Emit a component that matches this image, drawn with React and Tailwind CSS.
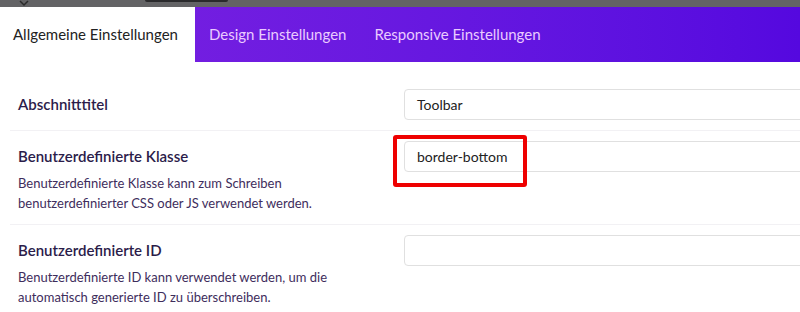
import React from "react";

const rows = [
  {
    label: "Abschnitttitel",
    value: "Toolbar",
    desc: null,
    pad: "pt-[27px] pb-[10px]",
  },
  {
    label: "Benutzerdefinierte Klasse",
    value: "border-bottom",
    desc: ["Benutzerdefinierte Klasse kann zum Schreiben", "benutzerdefinierter CSS oder JS verwendet werden."],
    pad: "pt-[10px] pb-[11px]",
    marked: true,
  },
  {
    label: "Benutzerdefinierte ID",
    value: "",
    desc: ["Benutzerdefinierte ID kann verwendet werden, um die", "automatisch generierte ID zu überschreiben."],
    pad: "pt-[10px] pb-[12px]",
  },
];

function Row({ row, last }) {
  return (
    <div className={`relative flex pl-2 ${row.pad} ${last ? "" : "border-b border-[#f2f1f4]"}`}>
      <div className="w-[386px] shrink-0">
        <div className="h-[31px] flex items-center text-[15px] font-semibold text-[#2b1c4a]">{row.label}</div>
        {row.desc && (
          <div className="mt-[1px] text-[13px] leading-[20px] text-[#3e2d5c]">
            {row.desc.map((l) => (
              <div key={l}>{l}</div>
            ))}
          </div>
        )}
      </div>
      <div className="relative">
        <div className="w-[430px] h-[31px] border border-[#e0e0e0] rounded-[4px] flex items-center px-3 text-[14px] text-[#222]">
          {row.value}
        </div>
        {row.marked && (
          <div className="absolute left-[-11px] top-[-6px] w-[134px] h-[52px] border-4 border-[#ee0000] rounded-[3px]" />
        )}
      </div>
    </div>
  );
}

export default function App() {
  return (
    <div className="w-[800px] h-[312px] overflow-hidden bg-white" style={{ fontFamily: "Lato, 'Open Sans', sans-serif" }}>
      <div className="relative h-[7px] bg-[#636365]">
        <svg className="absolute left-[18px] top-0" width="12" height="7" viewBox="0 0 12 7">
          <path d="M2 1l4 4 4-4" fill="none" stroke="#2b2b2b" strokeWidth="1.5" />
        </svg>
        <div className="absolute left-[145px] top-0 w-[83px] h-[2px] bg-[#2a2a2c] rounded-b" />
      </div>
      <div className="flex h-[55px] bg-linear-to-r from-[#7c21e1] to-[#5508df] text-[15px]">
        <div className="w-[195px] bg-white flex items-center pl-[13px] text-[#222]">Allgemeine Einstellungen</div>
        <div className="flex items-center px-[14px] text-[#eacbff]">Design Einstellungen</div>
        <div className="flex items-center px-[14px] text-[#eacbff]">Responsive Einstellungen</div>
      </div>
      <div className="ml-[10px]">
        {rows.map((r, i) => (
          <Row key={r.label} row={r} last={i === rows.length - 1} />
        ))}
      </div>
    </div>
  );
}
